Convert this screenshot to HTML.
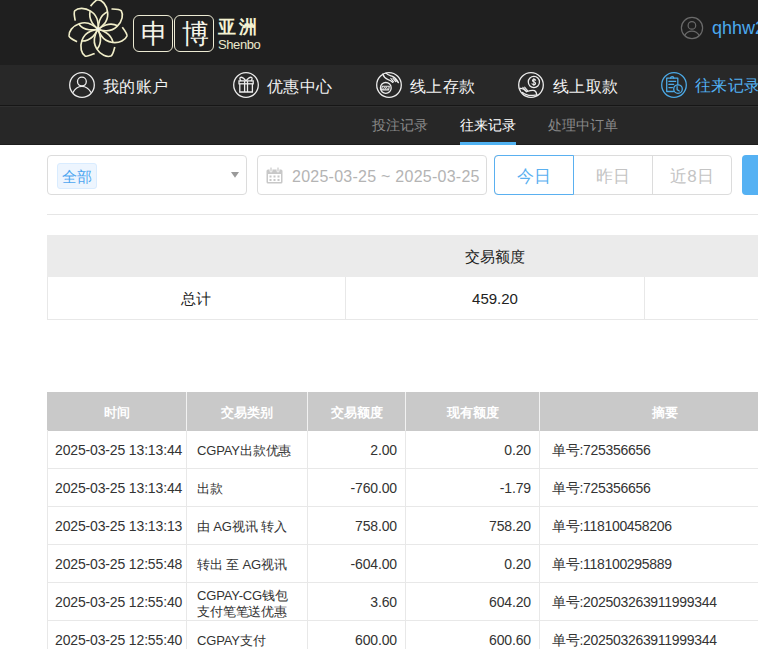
<!DOCTYPE html>
<html><head><meta charset="utf-8">
<style>
*{margin:0;padding:0;box-sizing:border-box}
html,body{width:758px;height:649px;overflow:hidden;background:#fff;font-family:"Liberation Sans",sans-serif;position:relative}
.abs{position:absolute}
#hdr{position:absolute;left:0;top:0;width:758px;height:65px;background:#1f1f1f}
#nav{position:absolute;left:0;top:65px;width:758px;height:41px;background:#282828;border-bottom:1px solid #161616}
#sub{position:absolute;left:0;top:106px;width:758px;height:39px;background:#272727;border-top:1px solid #303030;border-bottom:1px solid #1d1d1d}
.nt{position:absolute;top:76px;font-size:16px;line-height:22px;letter-spacing:0.4px;color:#f2f2f2;white-space:nowrap}
.st{position:absolute;top:116px;font-size:14px;line-height:18px;color:#8a8a8a;white-space:nowrap}
.box{position:absolute;border:1px solid #dcdcdc;border-radius:4px;background:#fff}
.tbl1{position:absolute;left:47px;top:235px;width:711px}
.cell{position:absolute;white-space:nowrap;font-size:14px;color:#333}
.hl{position:absolute;background:#e8e8e8}
.th{position:absolute;top:392px;height:39px;line-height:41px;color:#fff;font-weight:bold;font-size:13px;text-align:center}
.r{position:absolute;font-size:14px;color:#333;white-space:nowrap;line-height:18px;letter-spacing:-0.15px}
.ty{font-size:13px;letter-spacing:-0.15px;margin-top:1px}
</style></head><body>
<div id="hdr"></div>
<div id="nav"></div>
<div id="sub"></div>

<!-- logo flower -->
<svg class="abs" style="left:60px;top:0" width="76" height="62" viewBox="0 0 76 62">
  <g transform="translate(38,29.3) scale(1.035)" fill="none" stroke="#f1eec9" stroke-width="1.6" stroke-linecap="butt">
    <g id="pt"><path d="M-7.2,-22.4 C-5,-25 -2.2,-28.6 0,-28.7 C4,-28.2 8.6,-23.5 9.3,-16.5 C9.7,-12.5 8.6,-8 5.6,-4.8 C3.8,-2.6 2,-1 0,0"/><path d="M0,0 C0.2,-3 0.6,-6 1.5,-8.5 C3,-12.5 6,-15.5 9.2,-17"/></g><use href="#pt" transform="rotate(51.429)"/><use href="#pt" transform="rotate(102.857)"/><use href="#pt" transform="rotate(154.286)"/><use href="#pt" transform="rotate(205.714)"/><use href="#pt" transform="rotate(257.143)"/><use href="#pt" transform="rotate(308.571)"/>
  </g>
  <circle cx="38" cy="29" r="1.6" fill="#f4f4ee"/>
</svg>
<div class="abs" style="left:133px;top:15px;width:40px;height:37px;border:1.3px solid #ecead3;border-radius:6px"></div>
<div class="abs" style="left:174px;top:15px;width:40px;height:37px;border:1.3px solid #ecead3;border-radius:6px"></div>
<div class="abs" style="left:134.5px;top:15.5px;width:40px;height:37px;font-size:27px;line-height:37px;text-align:center;color:#f6f5ea;font-weight:300">申</div>
<div class="abs" style="left:175.5px;top:15.5px;width:40px;height:37px;font-size:27px;line-height:37px;text-align:center;color:#f6f5ea;font-weight:300">博</div>
<div class="abs" style="left:218px;top:15px;font-size:18px;line-height:24px;color:#f4f2d2;letter-spacing:3px;white-space:nowrap;font-weight:bold">亚洲</div>
<div class="abs" style="left:218px;top:37px;font-size:13px;line-height:16px;color:#ebe9cc;white-space:nowrap;letter-spacing:-0.4px">Shenbo</div>

<!-- user -->
<svg class="abs" style="left:680px;top:16px" width="24" height="24" viewBox="0 0 24 24">
  <g fill="none" stroke="#6a6a6a" stroke-width="1.2">
    <circle cx="12" cy="12" r="10.6"/>
    <circle cx="11.9" cy="9.4" r="3.8"/>
    <path d="M4.6,19.6 C6.2,16.6 9,15.2 11.9,15.2 C14.8,15.2 17.6,16.6 19.2,19.6"/>
  </g>
</svg>
<div class="abs" style="left:712px;top:17px;font-size:18px;line-height:22px;color:#4ba9ef;white-space:nowrap">qhhw2</div>

<!-- nav icons -->
<svg class="abs" style="left:68px;top:71px" width="28" height="28" viewBox="0 0 28 28">
  <g fill="none" stroke="#ececec" stroke-width="1.3">
    <circle cx="14" cy="14" r="12.3"/>
    <circle cx="13.9" cy="10.6" r="4.4"/>
    <path d="M4.8,21.6 C7,17.5 10.5,15.3 13.9,15.3 C17.3,15.3 20.8,17.5 23.2,21.6"/>
  </g>
</svg>
<div class="nt" style="left:103px">我的账户</div>

<svg class="abs" style="left:232px;top:71px" width="28" height="28" viewBox="0 0 28 28">
  <g fill="none" stroke="#ececec" stroke-width="1.3">
    <circle cx="14" cy="14" r="12.3"/>
    <rect x="7" y="9.9" width="14.2" height="2.9"/>
    <path d="M7.8,12.8 V21 H20.4 V12.8"/>
    <path d="M12.6,9.9 V21 M15.5,9.9 V21"/>
    <path d="M14,9.9 C12.5,8 10,6 8.6,6.3 C7.4,6.6 7.8,8.8 9.2,9.9 M14,9.9 C15.5,8 18,6 19.4,6.3 C20.6,6.6 20.2,8.8 18.8,9.9"/>
  </g>
</svg>
<div class="nt" style="left:267px">优惠中心</div>

<svg class="abs" style="left:375px;top:71px" width="28" height="28" viewBox="0 0 28 28">
  <g fill="none" stroke="#ececec" stroke-width="1.3" stroke-linecap="round" stroke-linejoin="round">
    <circle cx="14" cy="14" r="12.3"/>
    <circle cx="10.8" cy="16.9" r="5.4"/>
    <path d="M7.3,15.2 H14.3 L13.6,18.9 H6.6 Z" stroke-width="1.1"/>
    <path d="M8.3,18.3 L9.6,15.9 L10.5,18.1 L11.4,15.9 L12.5,18.1" stroke-width="0.8"/>
    <path d="M7.8,3 C8.6,5.6 10.2,7.4 12.6,8.3 C14.6,9 16.2,9.6 17.6,11.2"/>
    <path d="M10.9,2.1 C12.6,3.8 15,4.4 17.5,5.4 C20.2,6.6 22.2,9.2 23.4,11.6"/>
    <path d="M15.8,7.4 L18.6,10.9 M17.9,7.1 L20.7,10.6 M20,7.6 L22.3,10.8" stroke-width="1.1"/>
  </g>
</svg>
<div class="nt" style="left:410px">线上存款</div>

<svg class="abs" style="left:517px;top:71px" width="28" height="28" viewBox="0 0 28 28">
  <g fill="none" stroke="#ececec" stroke-width="1.3" stroke-linecap="round" stroke-linejoin="round">
    <circle cx="14" cy="14" r="12.3"/>
    <circle cx="16.9" cy="11" r="5.6"/>
    <path d="M18.6,9.2 C18.2,8.2 15.4,8 15.5,9.6 C15.6,11 18.6,10.7 18.6,12.4 C18.6,14 15.6,13.9 15,12.8 M16.9,7.3 V14.6" stroke-width="1.1"/>
    <path d="M3.3,17.5 C5.5,17 7.5,18.5 9.5,20.5" />
    <path d="M5.8,16.4 L9,19.8 M7.6,16.2 L10.6,19.6" stroke-width="1.1"/>
    <path d="M5.5,21.4 C8.5,24 12.5,24.6 16.2,24.3 C17.6,24.2 19,24 19.9,23.8"/>
    <path d="M9.5,20.5 C12,19.8 15,18.8 17.6,19.6 C18.8,20.4 19.6,22 19.9,23.8"/>
  </g>
</svg>
<div class="nt" style="left:553px">线上取款</div>

<svg class="abs" style="left:660px;top:71px" width="28" height="28" viewBox="0 0 28 28">
  <g fill="none" stroke="#4ca9e6" stroke-width="1.3" stroke-linecap="round" stroke-linejoin="round">
    <circle cx="14" cy="14" r="12.3"/>
    <path d="M13.4,20.5 H6.7 V7.2 H17.8 V13.8"/>
    <path d="M10.6,7.2 C10.6,5.2 13.8,5.2 13.8,7.2"/>
    <path d="M8.9,10.4 H15.6 M8.9,13.4 H13.6 M8.9,16.6 H12.4"/>
    <circle cx="18" cy="18.1" r="4.3"/>
    <path d="M17.1,15.6 V18.6 L19.3,20"/>
  </g>
</svg>
<div class="nt" style="left:695px;top:75px;color:#52b1f3">往来记录</div>

<!-- sub nav -->
<div class="st" style="left:372px">投注记录</div>
<div class="st" style="left:460px;color:#fff">往来记录</div>
<div class="abs" style="left:460px;top:142px;width:56px;height:3px;background:#50b2f2"></div>
<div class="st" style="left:548px">处理中订单</div>

<!-- filters -->
<div class="box" style="left:47px;top:155px;width:200px;height:40px"></div>
<div class="abs" style="left:57px;top:163px;width:40px;height:26px;background:#edf5fe;border:1px solid #d9ecff;border-radius:3px;color:#4da6f0;font-size:14.5px;line-height:27px;text-align:center">全部</div>
<svg class="abs" style="left:231px;top:172px" width="9" height="6" viewBox="0 0 9 6"><path d="M0,0 H8 L4,5.7 Z" fill="#9a9a9a"/></svg>

<div class="box" style="left:257px;top:155px;width:230px;height:40px"></div>
<svg class="abs" style="left:266px;top:167px" width="17" height="17" viewBox="0 0 17 17">
  <g fill="#c8c8c8">
    <rect x="0.5" y="2.5" width="16" height="14" rx="1.5"/>
  </g>
  <g fill="#fff">
    <rect x="2" y="7" width="13" height="8"/>
  </g>
  <g fill="#c8c8c8">
    <rect x="3.5" y="8.5" width="2" height="2"/><rect x="7.5" y="8.5" width="2" height="2"/><rect x="11.5" y="8.5" width="2" height="2"/>
    <rect x="3.5" y="12" width="2" height="2"/><rect x="7.5" y="12" width="2" height="2"/><rect x="11.5" y="12" width="2" height="2"/>
  </g>
  <g fill="#c8c8c8" stroke="#fff" stroke-width="0.8"><rect x="4" y="0" width="2" height="5" rx="1"/><rect x="11" y="0" width="2" height="5" rx="1"/></g>
</svg>
<div class="abs" style="left:292px;top:167px;font-size:16px;line-height:19px;letter-spacing:0.25px;color:#b4b4b4;white-space:nowrap">2025-03-25 ~ 2025-03-25</div>

<div class="abs" style="left:494px;top:155px;width:238px;height:40px;border:1px solid #dcdcdc;border-radius:4px"></div>
<div class="abs" style="left:652px;top:156px;width:1px;height:38px;background:#dcdcdc"></div>
<div class="abs" style="left:494px;top:155px;width:80px;height:40px;border:1px solid #5ab0f0;border-radius:4px 0 0 4px;color:#5ab0f0;font-size:17px;line-height:41px;text-align:center">今日</div>
<div class="abs" style="left:573px;top:155px;width:80px;height:40px;color:#c4c4c4;font-size:17px;line-height:43px;text-align:center">昨日</div>
<div class="abs" style="left:652px;top:155px;width:80px;height:40px;color:#c4c4c4;font-size:17px;line-height:43px;text-align:center">近8日</div>
<div class="abs" style="left:742px;top:155px;width:40px;height:40px;background:#55b1f3;border-radius:4px"></div>

<div class="abs" style="left:47px;top:214px;width:711px;height:1px;background:#e6e6e6"></div>

<!-- summary table -->
<div class="abs" style="left:47px;top:235px;width:711px;height:42px;background:#ebebeb"></div>
<div class="abs" style="left:47px;top:277px;width:730px;height:43px;border:1px solid #e8e8e8;border-top:none"></div>
<div class="abs" style="left:345px;top:277px;width:1px;height:42px;background:#e8e8e8"></div>
<div class="abs" style="left:644px;top:277px;width:1px;height:42px;background:#e8e8e8"></div>
<div class="abs" style="left:345px;top:235px;width:300px;height:42px;line-height:43px;text-align:center;font-size:15px;color:#222">交易额度</div>
<div class="abs" style="left:47px;top:277px;width:298px;height:42px;line-height:43px;text-align:center;font-size:15px;color:#222">总计</div>
<div class="abs" style="left:345px;top:277px;width:300px;height:42px;line-height:43px;text-align:center;font-size:15px;color:#222">459.20</div>

<!-- records table -->
<div class="abs" style="left:47px;top:392px;width:711px;height:39px;background:#c9c9c9"></div>
<div class="abs" style="left:186px;top:392px;width:1px;height:39px;background:#f2f2f2"></div>
<div class="abs" style="left:307px;top:392px;width:1px;height:39px;background:#f2f2f2"></div>
<div class="abs" style="left:405px;top:392px;width:1px;height:39px;background:#f2f2f2"></div>
<div class="abs" style="left:539px;top:392px;width:1px;height:39px;background:#f2f2f2"></div>
<div class="th" style="left:47px;width:139px">时间</div>
<div class="th" style="left:187px;width:120px">交易类别</div>
<div class="th" style="left:308px;width:97px">交易额度</div>
<div class="th" style="left:406px;width:133px">现有额度</div>
<div class="th" style="left:540px;width:250px">摘要</div>

<!--ROWS-->
<div class="hl" style="left:47px;top:468px;width:711px;height:1px"></div>
<div class="hl" style="left:47px;top:430px;width:1px;height:38px"></div>
<div class="hl" style="left:186px;top:430px;width:1px;height:38px"></div>
<div class="hl" style="left:307px;top:430px;width:1px;height:38px"></div>
<div class="hl" style="left:405px;top:430px;width:1px;height:38px"></div>
<div class="hl" style="left:539px;top:430px;width:1px;height:38px"></div>
<div class="r" style="left:55px;top:441px">2025-03-25 13:13:44</div>
<div class="r ty" style="left:197px;top:441px">CGPAY出款优惠</div>
<div class="r" style="left:307px;width:90px;text-align:right;top:441px">2.00</div>
<div class="r" style="left:405px;width:126px;text-align:right;top:441px">0.20</div>
<div class="r" style="left:552px;top:441px;letter-spacing:-0.3px">单号:725356656</div>
<div class="hl" style="left:47px;top:506px;width:711px;height:1px"></div>
<div class="hl" style="left:47px;top:468px;width:1px;height:38px"></div>
<div class="hl" style="left:186px;top:468px;width:1px;height:38px"></div>
<div class="hl" style="left:307px;top:468px;width:1px;height:38px"></div>
<div class="hl" style="left:405px;top:468px;width:1px;height:38px"></div>
<div class="hl" style="left:539px;top:468px;width:1px;height:38px"></div>
<div class="r" style="left:55px;top:479px">2025-03-25 13:13:44</div>
<div class="r ty" style="left:197px;top:479px">出款</div>
<div class="r" style="left:307px;width:90px;text-align:right;top:479px">-760.00</div>
<div class="r" style="left:405px;width:126px;text-align:right;top:479px">-1.79</div>
<div class="r" style="left:552px;top:479px;letter-spacing:-0.3px">单号:725356656</div>
<div class="hl" style="left:47px;top:544px;width:711px;height:1px"></div>
<div class="hl" style="left:47px;top:506px;width:1px;height:38px"></div>
<div class="hl" style="left:186px;top:506px;width:1px;height:38px"></div>
<div class="hl" style="left:307px;top:506px;width:1px;height:38px"></div>
<div class="hl" style="left:405px;top:506px;width:1px;height:38px"></div>
<div class="hl" style="left:539px;top:506px;width:1px;height:38px"></div>
<div class="r" style="left:55px;top:517px">2025-03-25 13:13:13</div>
<div class="r ty" style="left:197px;top:517px">由 AG视讯 转入</div>
<div class="r" style="left:307px;width:90px;text-align:right;top:517px">758.00</div>
<div class="r" style="left:405px;width:126px;text-align:right;top:517px">758.20</div>
<div class="r" style="left:552px;top:517px;letter-spacing:-0.3px">单号:118100458206</div>
<div class="hl" style="left:47px;top:582px;width:711px;height:1px"></div>
<div class="hl" style="left:47px;top:544px;width:1px;height:38px"></div>
<div class="hl" style="left:186px;top:544px;width:1px;height:38px"></div>
<div class="hl" style="left:307px;top:544px;width:1px;height:38px"></div>
<div class="hl" style="left:405px;top:544px;width:1px;height:38px"></div>
<div class="hl" style="left:539px;top:544px;width:1px;height:38px"></div>
<div class="r" style="left:55px;top:555px">2025-03-25 12:55:48</div>
<div class="r ty" style="left:197px;top:555px">转出 至 AG视讯</div>
<div class="r" style="left:307px;width:90px;text-align:right;top:555px">-604.00</div>
<div class="r" style="left:405px;width:126px;text-align:right;top:555px">0.20</div>
<div class="r" style="left:552px;top:555px;letter-spacing:-0.3px">单号:118100295889</div>
<div class="hl" style="left:47px;top:620px;width:711px;height:1px"></div>
<div class="hl" style="left:47px;top:582px;width:1px;height:38px"></div>
<div class="hl" style="left:186px;top:582px;width:1px;height:38px"></div>
<div class="hl" style="left:307px;top:582px;width:1px;height:38px"></div>
<div class="hl" style="left:405px;top:582px;width:1px;height:38px"></div>
<div class="hl" style="left:539px;top:582px;width:1px;height:38px"></div>
<div class="r" style="left:55px;top:593px">2025-03-25 12:55:40</div>
<div class="r ty" style="left:197px;top:587px;line-height:16px">CGPAY-CG钱包<br>支付笔笔送优惠</div>
<div class="r" style="left:307px;width:90px;text-align:right;top:593px">3.60</div>
<div class="r" style="left:405px;width:126px;text-align:right;top:593px">604.20</div>
<div class="r" style="left:552px;top:593px;letter-spacing:-0.3px">单号:202503263911999344</div>
<div class="hl" style="left:47px;top:658px;width:711px;height:1px"></div>
<div class="hl" style="left:47px;top:620px;width:1px;height:38px"></div>
<div class="hl" style="left:186px;top:620px;width:1px;height:38px"></div>
<div class="hl" style="left:307px;top:620px;width:1px;height:38px"></div>
<div class="hl" style="left:405px;top:620px;width:1px;height:38px"></div>
<div class="hl" style="left:539px;top:620px;width:1px;height:38px"></div>
<div class="r" style="left:55px;top:631px">2025-03-25 12:55:40</div>
<div class="r ty" style="left:197px;top:631px">CGPAY支付</div>
<div class="r" style="left:307px;width:90px;text-align:right;top:631px">600.00</div>
<div class="r" style="left:405px;width:126px;text-align:right;top:631px">600.60</div>
<div class="r" style="left:552px;top:631px;letter-spacing:-0.3px">单号:202503263911999344</div>
<!--/ROWS-->
</body></html>
